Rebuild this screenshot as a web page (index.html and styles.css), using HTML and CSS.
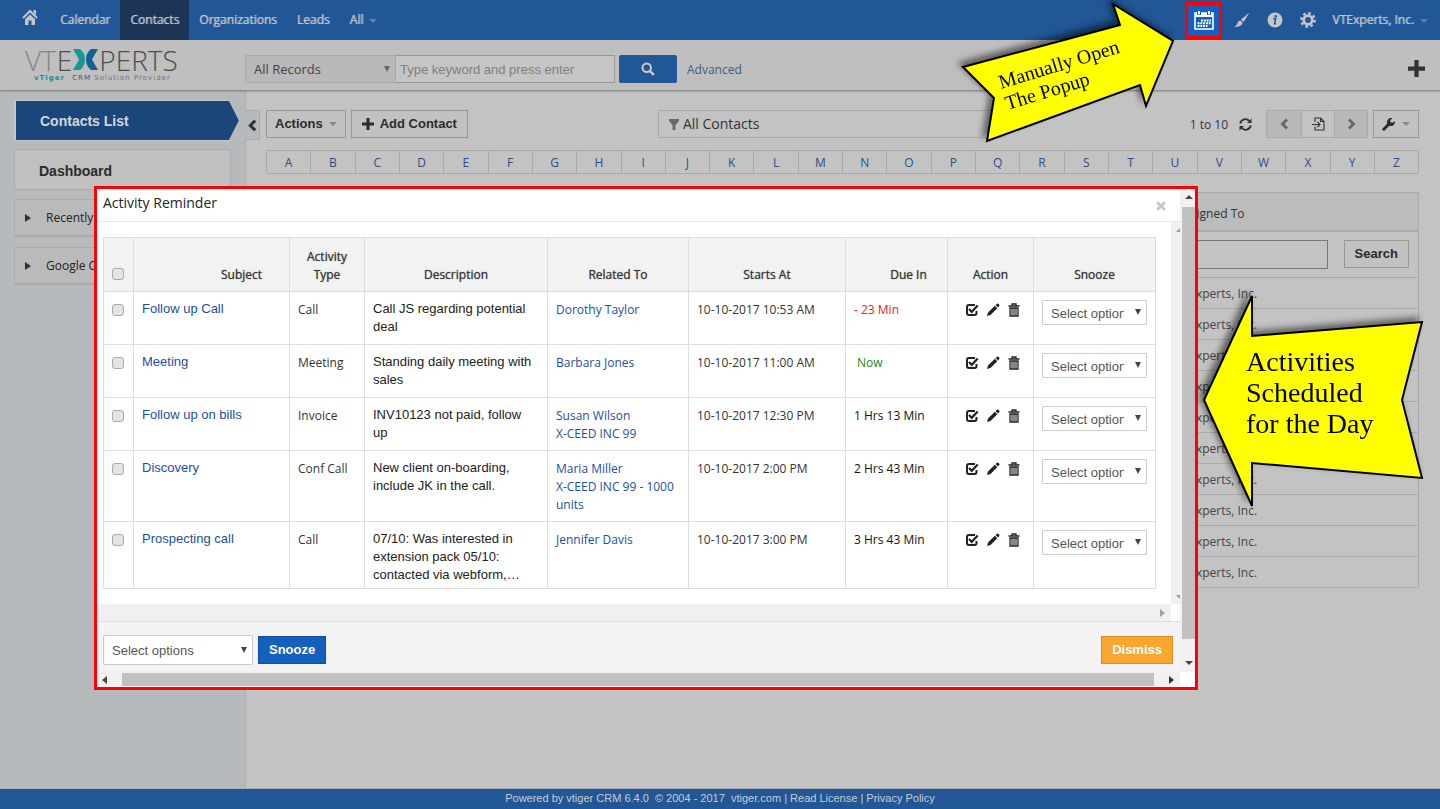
FILE: index.html
```html
<!DOCTYPE html>
<html lang="en">
<head>
<meta charset="utf-8">
<title>Contacts</title>
<link rel="stylesheet" href="styles.css">
</head>
<body>
<svg class="defs" width="0" height="0" aria-hidden="true">
  <symbol id="i-check" viewBox="0 0 14 14"><path d="M10 2H4a2 2 0 0 0-2 2v6a2 2 0 0 0 2 2h5.500a2 2 0 0 0 2-2V8" fill="none" stroke="currentColor" stroke-width="2"/><path d="M4 6l2.700 2.800L12.700 2.500" fill="none" stroke="currentColor" stroke-width="2.200"/></symbol>
  <symbol id="i-pencil" viewBox="0 0 14 14"><path d="M1 13l1-3.500 6.800-6.800 2.500 2.500L4.500 12zM9.500 2L11 .7q.7-.5 1.300 0l1 1q.5.700 0 1.300L12 4.500z" fill="currentColor"/></symbol>
  <symbol id="i-trash" viewBox="0 0 14 14"><path d="M5 2.500V1h4v1.500M1.500 3h11M3 5v8h8V5z" fill="none" stroke="currentColor" stroke-width="1.300"/><path d="M5 5v7.500M7 5v7.500M9 5v7.500" stroke="currentColor" stroke-width="1.100"/></symbol>
  <symbol id="i-plus" viewBox="0 0 12 12"><path d="M4.500 0h3v4.500H12v3H7.500V12h-3V7.500H0v-3h4.500z" fill="currentColor"/></symbol>
  <symbol id="i-left" viewBox="0 0 8 12"><path d="M6.500 1.500L2 6l4.500 4.500" fill="none" stroke="currentColor" stroke-width="2.800"/></symbol>
  <symbol id="i-right" viewBox="0 0 8 12"><path d="M1.500 1.500L6 6l-4.500 4.500" fill="none" stroke="currentColor" stroke-width="2.800"/></symbol>
</svg>

<nav class="nav">
  <a class="nav-home" href="#" aria-label="Home"><svg width="16" height="17" viewBox="0 0 16 17"><path d="M1 9l7-7 7 7" fill="none" stroke="currentColor" stroke-width="2"/><path d="M11.500 1H14v5l-2.500-2.300z" fill="currentColor"/><path d="M3 10.300L8 5.500l5 4.800V16H9.500v-4.500h-3V16H3z" fill="currentColor"/></svg></a>
  <a class="nav-link" href="#">Calendar</a>
  <a class="nav-link active" href="#">Contacts</a>
  <a class="nav-link" href="#">Organizations</a>
  <a class="nav-link" href="#">Leads</a>
  <a class="nav-link" href="#">All <i class="caret"></i></a>
  <div class="nav-right">
    <button class="cal" aria-label="Activity reminder"><svg width="20" height="20" viewBox="0 0 20 20"><path d="M1 3h18v16H1z" fill="none" stroke="currentColor" stroke-width="1.600"/><path d="M1 3h18v4H1z" fill="currentColor"/><path d="M5 1v4M15 1v4" stroke="#1560bd" stroke-width="4"/><path d="M5 1v3.500M15 1v3.500" stroke="currentColor" stroke-width="2"/><path d="M7 10.500h10M3.500 13.300H17M3.500 16h10" stroke="currentColor" stroke-width="1.900" stroke-dasharray="2 .8"/></svg></button>
    <button class="nav-icon" aria-label="Theme"><svg width="16" height="16" viewBox="0 0 16 16"><path d="M15.500.5L9.500 10 7 7.500zM6.300 8.500l2.300 2.300q-.5 4-8.300 4.400Q3 13.500 3.500 11 4.300 8.500 6.300 8.500z" fill="currentColor"/></svg></button>
    <button class="nav-icon" aria-label="Info"><svg width="16" height="16" viewBox="0 0 16 16"><circle cx="8" cy="8" r="7.500" fill="currentColor"/><circle cx="8.800" cy="4.300" r="1.300" fill="#215697"/><path d="M6.300 6.800h2.300l-1 5h1.300" fill="none" stroke="#215697" stroke-width="1.500"/></svg></button>
    <button class="nav-icon" aria-label="Settings"><svg width="16" height="16" viewBox="0 0 16 16"><circle cx="8" cy="8" r="4.300" fill="none" stroke="currentColor" stroke-width="2.800"/><circle cx="8" cy="8" r="6.700" fill="none" stroke="currentColor" stroke-width="2.400" stroke-dasharray="2.630 2.630"/></svg></button>
    <a class="nav-user" href="#">VTExperts, Inc. <i class="caret"></i></a>
  </div>
</nav>

<header class="header">
  <a class="logo" href="#" aria-label="VTExperts">
    <span class="logo-name"><span class="lt">VT</span>E<svg width="25" height="21" viewBox="0 0 25 21"><path d="M0 0h7q5 4 5 10.500T7 21H0l6-10.500z" fill="#159a93"/><path d="M25 0h-7q-5 4-5 10.500T18 21h7l-6-10.500z" fill="#145f95"/></svg>PERTS</span>
    <span class="logo-sub"><b>vTiger</b> <em>CRM</em> Solution Provider</span>
  </a>
  <div class="search">
    <span class="sel sel-records"><select aria-label="Search in"><option>All Records</option></select></span>
    <input class="search-box" type="text" aria-label="Keyword" placeholder="Type keyword and press enter">
    <button class="search-btn" aria-label="Search records"><svg width="14" height="14" viewBox="0 0 14 14"><circle cx="5.700" cy="5.700" r="4.200" fill="none" stroke="currentColor" stroke-width="2"/><path d="M8.800 8.800l4 4" stroke="currentColor" stroke-width="2.500"/></svg></button>
    <a class="advanced" href="#">Advanced</a>
  </div>
  <button class="quick" aria-label="Quick create"><svg width="17" height="17"><use href="#i-plus"/></svg></button>
</header>

<div class="page">
  <aside class="side">
    <a class="side-active" href="#"><span>Contacts List</span></a>
    <a class="side-dash" href="#">Dashboard</a>
    <button class="side-item"><i class="tri"></i>Recently Modified</button>
    <button class="side-item"><i class="tri"></i>Google Contacts</button>
  </aside>
  <main class="main">
    <button class="toggle" aria-label="Collapse sidebar"><svg width="9" height="13"><use href="#i-left"/></svg></button>
    <div class="tools">
      <button class="btn">Actions <i class="caret"></i></button>
      <button class="btn"><svg width="12" height="12"><use href="#i-plus"/></svg>Add Contact</button>
      <button class="filter"><svg width="10" height="11" viewBox="0 0 10 11"><path d="M0 0h10v2L6.500 6v5h-3V6L0 2z" fill="#6a6a6a"/></svg>All Contacts</button>
      <div class="pager">
        <span class="range">1 to 10</span>
        <button class="refresh" aria-label="Refresh"><svg width="13" height="13" viewBox="0 0 13 13"><path d="M1.200 5.500A5.300 5.300 0 0 1 10.500 3.200M11.800 7.500A5.300 5.300 0 0 1 2.500 9.800" fill="none" stroke="currentColor" stroke-width="1.800"/><path d="M12.500.5v4.500H8zM.5 12.500V8H5z" fill="currentColor"/></svg></button>
        <span class="pages"><button class="dim" aria-label="Previous page"><svg width="9" height="12"><use href="#i-left"/></svg></button><button aria-label="Go to page"><svg width="13" height="14" viewBox="0 0 13 14"><path d="M3 5V1h5.500L12 4.500V13H3V9.500M8.500 1v3.500H12M0 7.500h7.500M5.500 5l2.500 2.500L5.500 10" fill="none" stroke="currentColor" stroke-width="1.100"/></svg></button><button class="dim" aria-label="Next page"><svg width="9" height="12"><use href="#i-right"/></svg></button></span>
        <button class="btn wrench" aria-label="Settings menu"><svg width="13" height="13" viewBox="0 0 13 13"><path d="M1.800 11.200L7.500 5.500" stroke="currentColor" stroke-width="3" stroke-linecap="round"/><path d="M10.500.3A4 4 0 1 0 12.800 3L10.500 4.700 8.500 4.300 8.200 2.300z" fill="currentColor"/></svg><i class="caret"></i></button>
      </div>
    </div>
    <div class="alpha"><a href="#">A</a><a href="#">B</a><a href="#">C</a><a href="#">D</a><a href="#">E</a><a href="#">F</a><a href="#">G</a><a href="#">H</a><a href="#">I</a><a href="#">J</a><a href="#">K</a><a href="#">L</a><a href="#">M</a><a href="#">N</a><a href="#">O</a><a href="#">P</a><a href="#">Q</a><a href="#">R</a><a href="#">S</a><a href="#">T</a><a href="#">U</a><a href="#">V</a><a href="#">W</a><a href="#">X</a><a href="#">Y</a><a href="#">Z</a></div>
    <table class="list">
      <thead>
        <tr><th></th><th class="col-user">Assigned To</th><th class="col-go"></th></tr>
      </thead>
      <tbody>
        <tr class="filters"><td></td><td><input type="text" aria-label="Assigned To"></td><td><button class="btn">Search</button></td></tr>
        <tr><td></td><td colspan="2">VTExperts, Inc.</td></tr>
        <tr><td></td><td colspan="2">VTExperts, Inc.</td></tr>
        <tr><td></td><td colspan="2">VTExperts, Inc.</td></tr>
        <tr><td></td><td colspan="2">VTExperts, Inc.</td></tr>
        <tr><td></td><td colspan="2">VTExperts, Inc.</td></tr>
        <tr><td></td><td colspan="2">VTExperts, Inc.</td></tr>
        <tr><td></td><td colspan="2">VTExperts, Inc.</td></tr>
        <tr><td></td><td colspan="2">VTExperts, Inc.</td></tr>
        <tr><td></td><td colspan="2">VTExperts, Inc.</td></tr>
        <tr><td></td><td colspan="2">VTExperts, Inc.</td></tr>
      </tbody>
    </table>
  </main>
</div>

<footer class="foot">Powered by vtiger CRM 6.4.0 &nbsp;© 2004 - 2017 &nbsp;<a href="#">vtiger.com</a> | <a href="#">Read License</a> | <a href="#">Privacy Policy</a></footer>

<section class="modal" role="dialog" aria-labelledby="modal-title">
  <div class="modal-main">
    <div class="modal-head"><h1 id="modal-title">Activity Reminder</h1><button class="close" aria-label="Close"><svg width="10" height="10" viewBox="0 0 10 10"><path d="M1.200 1.200l7.600 7.600M8.800 1.200L1.200 8.800" stroke="currentColor" stroke-width="2.800"/></svg></button></div>
    <div class="modal-body">
      <div class="modal-content">
        <table class="acts">
          <colgroup><col class="c1"><col class="c2"><col class="c3"><col class="c4"><col class="c5"><col class="c6"><col class="c7"><col class="c8"><col class="c9"></colgroup>
          <thead><tr><th><input type="checkbox" aria-label="Select all"></th><th class="shift">Subject</th><th>Activity Type</th><th>Description</th><th>Related To</th><th>Starts At</th><th class="due">Due In</th><th>Action</th><th>Snooze</th></tr></thead>
          <tbody>
            <tr><td><input type="checkbox" aria-label="Select Follow up Call"></td><td class="ar"><a href="#">Follow up Call</a></td><td>Call</td><td class="ar">Call JS regarding potential deal</td><td><a href="#">Dorothy Taylor</a></td><td>10-10-2017 10:53 AM</td><td class="late">- 23 Min</td>
              <td><div class="icons"><button aria-label="Done"><svg><use href="#i-check"/></svg></button><button aria-label="Edit"><svg><use href="#i-pencil"/></svg></button><button aria-label="Delete"><svg><use href="#i-trash"/></svg></button></div></td><td><span class="sel"><select aria-label="Snooze"><option>Select options</option></select></span></td></tr>
            <tr><td><input type="checkbox" aria-label="Select Meeting"></td><td class="ar"><a href="#">Meeting</a></td><td>Meeting</td><td class="ar">Standing daily meeting with sales</td><td><a href="#">Barbara Jones</a></td><td>10-10-2017 11:00 AM</td><td class="now">Now</td>
              <td><div class="icons"><button aria-label="Done"><svg><use href="#i-check"/></svg></button><button aria-label="Edit"><svg><use href="#i-pencil"/></svg></button><button aria-label="Delete"><svg><use href="#i-trash"/></svg></button></div></td><td><span class="sel"><select aria-label="Snooze"><option>Select options</option></select></span></td></tr>
            <tr><td><input type="checkbox" aria-label="Select Follow up on bills"></td><td class="ar"><a href="#">Follow up on bills</a></td><td>Invoice</td><td class="ar">INV10123 not paid, follow up</td><td><a href="#">Susan Wilson<br>X-CEED INC 99</a></td><td>10-10-2017 12:30 PM</td><td class="in">1 Hrs 13 Min</td>
              <td><div class="icons"><button aria-label="Done"><svg><use href="#i-check"/></svg></button><button aria-label="Edit"><svg><use href="#i-pencil"/></svg></button><button aria-label="Delete"><svg><use href="#i-trash"/></svg></button></div></td><td><span class="sel"><select aria-label="Snooze"><option>Select options</option></select></span></td></tr>
            <tr><td><input type="checkbox" aria-label="Select Discovery"></td><td class="ar"><a href="#">Discovery</a></td><td>Conf Call</td><td class="ar">New client on-boarding, include JK in the call.</td><td><a href="#">Maria Miller<br>X-CEED INC 99 - 1000 units</a></td><td>10-10-2017 2:00 PM</td><td class="in">2 Hrs 43 Min</td>
              <td><div class="icons"><button aria-label="Done"><svg><use href="#i-check"/></svg></button><button aria-label="Edit"><svg><use href="#i-pencil"/></svg></button><button aria-label="Delete"><svg><use href="#i-trash"/></svg></button></div></td><td><span class="sel"><select aria-label="Snooze"><option>Select options</option></select></span></td></tr>
            <tr class="last"><td><input type="checkbox" aria-label="Select Prospecting call"></td><td class="ar"><a href="#">Prospecting call</a></td><td>Call</td><td class="ar">07/10: Was interested in extension pack 05/10: contacted via webform,…</td><td><a href="#">Jennifer Davis</a></td><td>10-10-2017 3:00 PM</td><td class="in">3 Hrs 43 Min</td>
              <td><div class="icons"><button aria-label="Done"><svg><use href="#i-check"/></svg></button><button aria-label="Edit"><svg><use href="#i-pencil"/></svg></button><button aria-label="Delete"><svg><use href="#i-trash"/></svg></button></div></td><td><span class="sel"><select aria-label="Snooze"><option>Select options</option></select></span></td></tr>
          </tbody>
        </table>
      </div>
      <div class="bar-v"><i class="corner up"></i><i class="corner down"></i></div>
      <div class="bar-h"><i class="tri"></i></div>
    </div>
    <div class="modal-foot">
      <span class="sel sel-all"><select aria-label="Snooze selected"><option>Select options</option></select></span>
      <button class="primary">Snooze</button>
      <button class="warn">Dismiss</button>
    </div>
  </div>
  <div class="scroll-v"><i class="tri north"></i><div class="thumb"></div><i class="tri south"></i></div>
  <div class="scroll-h"><i class="tri west"></i><div class="thumb"></div><i class="tri"></i></div>
</section>

<svg class="callout callout-open" width="220" height="150" viewBox="0 0 220 150">
  <path d="M13 67L170 25 163 4 223 41 196 106 190 85 37 141 44 98z" fill="#ff0" stroke="#000" stroke-width="2"/>
  <g transform="translate(51 89) rotate(-17)"><text x="0" y="0" font-size="20">Manually Open</text><text x="0" y="22" font-size="20">The Popup</text></g>
</svg>
<svg class="callout callout-acts" width="230" height="230" viewBox="0 0 230 230">
  <path d="M4 115L52 11V51L222 37 202 115 222 193 52 178V221z" fill="#ff0" stroke="#000" stroke-width="2"/>
  <text x="46" y="86" font-size="28">Activities</text><text x="46" y="117" font-size="28">Scheduled</text><text x="46" y="148" font-size="28">for the Day</text>
</svg>
</body>
</html>
```
FILE: styles.css
```css
* { box-sizing: border-box; }
body { margin: 0; min-height: 100vh; display: flex; flex-direction: column; position: relative; overflow: hidden; background: #c3c3c3; color: #333; font: 12px/18px "Open Sans", sans-serif; }
a { color: inherit; text-decoration: none; }
button, input, select { font: inherit; color: inherit; margin: 0; }
button { padding: 0; border: 0; background: none; display: flex; align-items: center; justify-content: center; }
svg { display: block; flex: none; }
.defs { position: absolute; }

.caret { display: inline-block; border: 4px solid transparent; border-top-color: #888; border-bottom: 0; vertical-align: middle; }
.tri { border: 4px solid transparent; border-left: 6px solid #333; border-right: 0; }

.nav { display: flex; height: 40px; background: #215697; color: #c3c7cc; text-shadow: 1px 0 0 rgba(195, 199, 204, .6); line-height: 40px; }
.nav-home { padding: 9px 12px 0 22px; }
.nav-link { padding: 0 10px; }
.nav-link.active { background: #1c3556; }
.nav .caret { border-top-color: #5c82ae; margin-left: 3px; }
.nav-right { margin-left: auto; display: flex; align-items: center; padding-right: 12px; }
.cal { width: 37px; height: 37px; border: 3px solid #f00; background: #1560bd; color: #fff; }
.nav-icon { margin-left: 17px; }
.cal + .nav-icon { margin-left: 12px; }
.nav-user { margin-left: 16px; }

.header { display: flex; align-items: center; height: 50px; background: #bfbfbf; box-shadow: 0 1px 2px #777; position: relative; padding-right: 15px; }
.logo { width: 245px; padding-left: 25px; }
.logo-name { display: flex; align-items: center; font: 28px/24px "Open Sans", sans-serif; color: #4d4d4d; font-weight: 300; gap: 1px; }
.logo-name .lt { color: #858585; }
.logo-sub { display: block; padding: 1px 0 0 9px; font: 7px/10px "DejaVu Sans", sans-serif; letter-spacing: 1px; color: #737373; }
.logo-sub b { color: #228e89; margin-right: 4px; }
.logo-sub em { font-style: normal; color: #265f88; }
.search { display: flex; align-items: center; padding-top: 8px; }

.sel { display: block; position: relative; }
.sel::after { content: ""; position: absolute; right: 6px; top: 9px; border: 3px solid transparent; border-top: 6px solid #444; border-bottom: 0; pointer-events: none; }
.sel select { appearance: none; display: block; width: 100%; height: 25px; padding: 2px 22px 0 8px; border: 1px solid #ccc; border-radius: 1px; background: #fff; color: #555; font: 13px/18px "Liberation Sans", Arial, sans-serif; }
.sel-records { width: 151px; }
.sel-records select { height: 28px; padding-top: 0; border-color: #aaa; background: #b9b9b9; color: #444; font: 13px/18px "Open Sans", sans-serif; }
.sel-records::after { top: 11px; border-top-color: #666; }
.search-box { width: 220px; height: 28px; margin-left: -1px; padding: 0 4px; border: 1px solid #999; background: #c5c5c5; font: 13px/18px "Liberation Sans", Arial, sans-serif; }
.search-box::placeholder { color: #808080; }
.search-btn { width: 58px; height: 28px; margin: 0 10px 0 4px; border-radius: 2px; background: #215697; color: #ccc; }
.advanced { color: #3f5a80; padding-top: 2px; }
.quick { margin: 7px 0 0 auto; color: #333; }

.page { flex: 1; display: flex; }
.side { width: 246px; background: #b7babd; border-right: 1px solid #adb0b3; padding: 10px 14px 0; display: flex; flex-direction: column; align-items: stretch; }
.side-active, .side-dash { font: bold 14px/20px "Liberation Sans", Arial, sans-serif; }
.side-active { height: 41px; margin: 0 -9px 8px 0; padding: 1px 0 0 2px; background: #c3c6c8; clip-path: polygon(0 0, 215px 0, 225px 50%, 215px 100%, 0 100%); color: #d3d6d9; }
.side-active span { display: block; height: 39px; padding: 10px 24px; background: #1b4679; clip-path: polygon(0 0, 213px 0, 223px 50%, 213px 100%, 0 100%); }
.side-dash { height: 41px; padding: 11px 24px; border: 1px solid #aaadaf; border-radius: 2px; background: #c0c0c0; color: #2b2b2b; margin-bottom: 9px; }
.side-item { justify-content: flex-start; gap: 15px; height: 38px; margin-bottom: 10px; padding: 1px 0 0 10px; border: 1px solid #aaa; border-bottom-width: 2px; background: #bababa; color: #222; white-space: nowrap; }

.main { flex: 1; min-width: 0; position: relative; padding: 19px 21px 0 20px; }
.toggle { position: absolute; left: -1px; top: 20px; width: 15px; height: 30px; background: #b7babd; border: 1px solid #aaa; border-left: 0; }
.tools { display: flex; align-items: center; height: 30px; }
.btn { height: 28px; padding: 0 10px; margin-right: 5px; border: 1px solid #989898; background: #c2c2c2; color: #2b2b2b; font: bold 13px/18px "Liberation Sans", Arial, sans-serif; gap: 6px; }
.btn:first-child { padding: 0 8px; }
.filter { width: 347px; height: 28px; margin-left: 185px; padding: 0 10px; justify-content: flex-start; gap: 4px; border: 1px solid #aaa; border-radius: 2px; font-size: 14px; }
.pager { margin-left: auto; display: flex; align-items: center; }
.range { color: #27384f; padding-top: 2px; }
.refresh { margin: 0 14px 0 11px; }
.pages { display: flex; margin-right: 5px; border: 1px solid #aaa; }
.pages button { width: 34px; height: 26px; }
.pages button + button { border-left: 1px solid #aaa; width: 33px; }
.pages .dim { background: #b8b8b8; color: #666; }
.pager .wrench { padding: 0 8px; margin: 0; gap: 7px; }
.alpha { display: flex; height: 24px; margin: 11px 0 18px; border: 1px solid #aaa; border-radius: 2px; color: #2c4f86; }
.alpha a { flex: 1; text-align: center; line-height: 23px; }
.alpha a + a { border-left: 1px solid #aaa; }
.list { width: 100%; border: 1px solid #aaa; border-collapse: collapse; table-layout: fixed; color: #444; }
.list th { height: 38px; padding: 6px 10px 0; border-bottom: 2px solid #aaa; background: #bcbcbc; text-align: left; font-weight: 400; color: #333; }
.list td { height: 31px; padding: 2px 8px 0; border-top: 1px solid #aaa; }
.list .filters td { height: 47px; padding-top: 0; }
.list input { display: block; width: 100%; height: 29px; border: 1px solid #777; background: #c3c3c3; }
.list .filters .btn { padding: 0 10px; }
.col-user { width: 168px; }
.col-go { width: 83px; }

.foot { height: 21px; border-top: 1px solid #a4a9b0; background: #215697; color: #c8ccd2; text-align: center; font: 11px/19px "Liberation Sans", Arial, sans-serif; }

.modal { position: absolute; left: 94px; right: 242px; top: 186px; display: grid; grid-template-columns: 1fr 15px; border: 3px solid #f00; background: #fff; }
.modal-head { display: flex; align-items: center; justify-content: space-between; height: 33px; padding: 0 14px 0 6px; border-bottom: 1px solid #e8e8e8; }
.modal-head h1 { margin: 0 0 4px; font-size: 14px; line-height: 20px; font-weight: 400; color: #222; }
.close { color: #c6c6c6; padding-top: 2px; }
.modal-body { display: grid; grid-template-columns: 1fr 9px; border-bottom: 1px solid #ddd; }
.modal-content { padding: 15px 15px 15px 6px; }
.bar-v { background: #f0f0f0; display: flex; flex-direction: column; justify-content: space-between; align-items: flex-end; padding: 6px 0 5px; }
.corner { border: 2px solid transparent; }
.up { border-right-color: #999; border-bottom-color: #999; }
.down { border-right-color: #999; border-top-color: #999; }
.bar-h { height: 17px; background: #f0f0f0; display: flex; align-items: center; justify-content: flex-end; padding-right: 6px; }
.bar-h .tri { border-left-color: #a3a3a3; border-left-width: 5px; }
.modal-foot { display: flex; align-items: center; height: 50px; padding: 6px 7px 0 6px; gap: 5px; background: #f3f3f3; }
.sel-all { width: 150px; }
.sel-all select { height: 30px; }
.sel-all::after { top: 12px; }
.primary, .warn { height: 28px; padding: 0 10px; font: bold 13px/18px "Liberation Sans", Arial, sans-serif; color: #fff; border: 1px solid #0f4fa3; background: #1560bd; }
.warn { margin-left: auto; border-color: #d98c25; background: #faa732; }
.scroll-v { display: flex; flex-direction: column; align-items: center; background: #f1f1f1; padding: 6px 0 7px 2px; gap: 8px; }
.scroll-v .thumb { flex: 1; width: 100%; margin-bottom: 14px; background: #c1c1c1; }
.tri.north { border: 4px solid transparent; border-bottom-color: #444; border-top: 0; }
.tri.south { border: 4px solid transparent; border-top-color: #444; border-bottom: 0; }
.tri.west { border: 4px solid transparent; border-right: 5px solid #444; border-left: 0; }
.scroll-h { display: flex; align-items: center; height: 15px; padding: 0 6px 0 5px; background: #f1f1f1; gap: 15px; }
.scroll-h .thumb { flex: 1; height: 13px; background: #c1c1c1; }
.scroll-h .tri:last-child { border-left-width: 5px; }

.acts { width: 100%; table-layout: fixed; border-collapse: collapse; }
.acts th, .acts td { border: 1px solid #ddd; padding: 9px 8px 8px; }
.acts th { height: 54px; padding: 8px 8px 7px; background: #f2f2f2; vertical-align: bottom; font-weight: 400; color: #333; text-shadow: 0 0 1px rgba(51, 51, 51, .7); }
.acts td { height: 53px; padding-bottom: 7px; vertical-align: top; }
.acts .ar { padding-top: 8px; font: 13px/18px "Liberation Sans", Arial, sans-serif; color: #222; }
.acts .last td { padding-bottom: 4px; }
.acts a, .acts .ar a { color: #1c4f9f; }
.acts .shift { padding-left: 68px; }
.acts .due { padding-left: 32px; }
.acts .late { color: #f02020; }
.acts .now { color: #168a16; padding-left: 11px; }
.acts .in { color: #111; }
.acts input { appearance: none; display: block; width: 12px; height: 12px; margin: 3px 0; border: 1px solid #aaa; border-radius: 3px; background: #e4e4e4; }
.acts th input { margin: 4px 0; }
.icons { display: flex; justify-content: center; gap: 7px; padding: 2px 0 0 4px; }
.icons svg { width: 14px; height: 14px; color: #222; }
.acts td:last-child { padding-top: 8px; }
.acts td .sel { width: 105px; }
.c1 { width: 30px; } .c2 { width: 156px; } .c3 { width: 75px; } .c4 { width: 183px; } .c5 { width: 141px; } .c6 { width: 157px; } .c7 { width: 102px; } .c8 { width: 86px; }

.callout { position: absolute; overflow: visible; filter: drop-shadow(-4px -4px 3px rgba(0, 0, 0, .5)); font-family: "Liberation Serif", serif; }
.callout-open { right: 270px; top: 0; }
.callout-acts { right: 10px; top: 285px; }
```
